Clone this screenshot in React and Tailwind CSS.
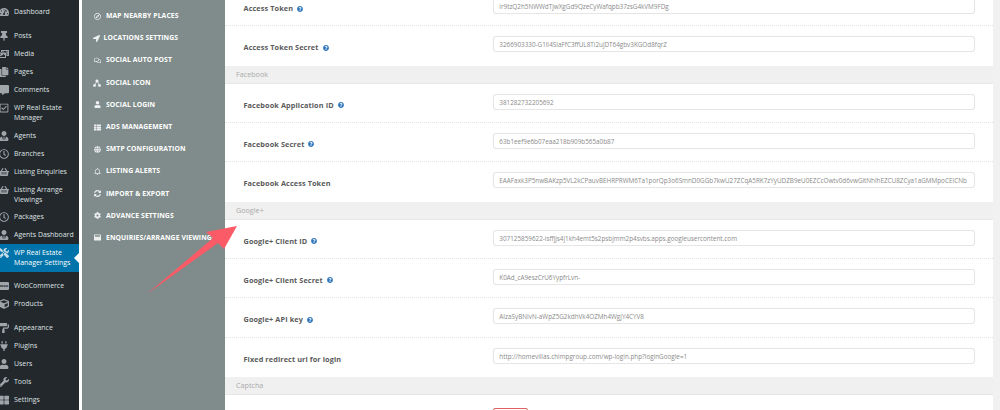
import React from "react";
import {
  FaTachometerAlt, FaThumbtack, FaPhotoVideo, FaCopy, FaCommentAlt, FaRegCheckSquare, FaUserTie, FaRegClock,
  FaShoppingBasket, FaTools, FaCube, FaPaintRoller, FaPlug, FaUser, FaWrench, FaThLarge, FaRegCompass,
  FaLocationArrow, FaRegComments, FaThList, FaGlobe, FaRegBell, FaSyncAlt, FaCog, FaWindowMaximize, FaQuestionCircle,
} from "react-icons/fa";

function HubIcon() {
  return (
    <svg width="8" height="8" viewBox="0 0 16 16" fill="currentColor" stroke="currentColor">
      <circle cx="8" cy="4" r="2.6" />
      <circle cx="3" cy="13" r="2.4" />
      <circle cx="13" cy="13" r="2.4" />
      <path d="M8 4 L3 13 M8 4 L13 13" strokeWidth="1.6" fill="none" />
    </svg>
  );
}

const menu = [
  { g: 3, items: [["Dashboard", FaTachometerAlt]] },
  {
    g: 6,
    items: [
      ["Posts", FaThumbtack],
      ["Media", FaPhotoVideo],
      ["Pages", FaCopy],
      ["Comments", FaCommentAlt],
      [["WP Real Estate", "Manager"], FaRegCheckSquare],
      ["Agents", FaUserTie],
      ["Branches", FaRegClock],
      ["Listing Enquiries", FaShoppingBasket],
      [["Listing Arrange", "Viewings"], FaShoppingBasket],
      ["Packages", FaRegClock],
      ["Agents Dashboard", FaUserTie],
      [["WP Real Estate", "Manager Settings"], FaTools, true],
    ],
  },
  { g: 5, items: [["WooCommerce", null], ["Products", FaCube]] },
  {
    g: 6,
    items: [
      ["Appearance", FaPaintRoller],
      ["Plugins", FaPlug],
      ["Users", FaUser],
      ["Tools", FaWrench],
      ["Settings", FaThLarge],
    ],
  },
];

function MenuItem({ label, Icon, active }) {
  const two = Array.isArray(label);
  return (
    <div
      className={`relative flex items-start pl-[14px] text-[6.95px] leading-[10px] font-medium whitespace-nowrap ${two ? "h-[27.5px] pt-[4px]" : "h-[18px] pt-[4px]"} ${active ? "bg-[#0073aa] text-white" : "text-[#dfe1e2]"}`}
    >
      <span className={`absolute left-[-1px] top-[4px] text-[10px] ${active ? "text-[#c5dbe6]" : "text-[#a0a5aa]"}`}>
        {Icon ? (
          <Icon />
        ) : (
          <span className="block mt-[1px] w-[10px] h-[8px] bg-[#a0a5aa] rounded-[1px] text-[4px] leading-[8px] text-center text-[#23282d] font-bold">woo</span>
        )}
      </span>
      <span>
        {two ? label.map((l) => <span key={l} className="block">{l}</span>) : label}
      </span>
      {active && (
        <span className="absolute right-0 top-[9px] w-0 h-0 border-y-[5px] border-y-transparent border-r-[5px] border-r-white" />
      )}
    </div>
  );
}

const tabs = [
  ["MAP NEARBY PLACES", FaRegCompass],
  ["LOCATIONS SETTINGS", FaLocationArrow, true],
  ["SOCIAL AUTO POST", FaRegComments],
  ["SOCIAL ICON", HubIcon],
  ["SOCIAL LOGIN", FaUser],
  ["ADS MANAGEMENT", FaThList],
  ["SMTP CONFIGURATION", FaGlobe],
  ["LISTING ALERTS", FaRegBell],
  ["IMPORT & EXPORT", FaSyncAlt],
  ["ADVANCE SETTINGS", FaCog],
  ["ENQUIRIES/ARRANGE VIEWINGS", FaWindowMaximize],
];

function Row({ label, help = true, value, last, first }) {
  return (
    <div className={`h-[39.33px] pl-[18.5px] pr-[18px] flex items-start ${last ? "" : "border-b border-dotted border-[#e3e3e3]"}`}>
      <div className="w-[250px] pt-[15px] text-[7.3px] leading-[13px] font-bold tracking-[0.1px] text-[#5b5b5b] flex items-center gap-[4px] whitespace-nowrap">
        {label}
        {help && <FaQuestionCircle className="text-[#2f75bb] text-[6px]" />}
      </div>
      <div className={`${first ? "mt-[11px]" : "mt-[10px]"} w-[482px] h-[16px] border border-[#e6e6e6] rounded-[3px] bg-white pl-[5px] pt-[1px] text-[6.33px] leading-[13px] text-[#8a8a8a] whitespace-nowrap overflow-hidden shadow-[0_0_1px_#eeeeee]`}>
        {value}
      </div>
    </div>
  );
}

function Section({ title }) {
  return (
    <div className="h-[18px] bg-[#f0f0f0] border-b border-[#e6e6e6] pl-[11px] text-[7.2px] leading-[17px] text-[#a9a9a9]">
      {title}
    </div>
  );
}

export default function App() {
  return (
    <div className="relative w-[1000px] h-[410px] overflow-hidden flex bg-white" style={{ fontFamily: '"Open Sans", "Noto Sans", sans-serif' }}>
      <aside className="w-[79px] shrink-0 bg-[#23282d]">
        {menu.map((grp, i) => (
          <div key={i} style={{ marginTop: grp.g }}>
            {grp.items.map(([l, Ic, a], j) => (
              <MenuItem key={j} label={l} Icon={Ic} active={a} />
            ))}
          </div>
        ))}
      </aside>
      <div className="w-[3px] shrink-0 bg-white" />
      <nav className="w-[143px] shrink-0 bg-[#7f8c8b] pt-[5px]">
        {tabs.map(([t, Ic, tight]) => (
          <div key={t} className="h-[22.2px] flex items-center text-white font-bold text-[6.8px] tracking-[0.1px] whitespace-nowrap">
            <span className={`${tight ? "w-[8px] ml-[10px]" : "w-[10px] ml-[10px]"} mr-[4px] text-[7px] text-[#eef0f0] flex justify-center`}>
              <Ic />
            </span>
            <span className={tight ? "-ml-[0.5px]" : ""}>{t}</span>
          </div>
        ))}
      </nav>
      <main className="w-[768px] shrink-0 bg-white -mt-[13px] self-start">
        <Row first label="Access Token" value="ir9tzQ2h5NWWdTjwXgGd9QzeCyWafqpb37zsG4kVM9FDg" />
        <Row label="Access Token Secret" value="3266903330-G1lI4SIaFfC3ffUL8Ti2ujDT64gbv3KGOd8fqrZ" last />
        <Section title="Facebook" />
        <Row label="Facebook Application ID" value="381282732205692" />
        <Row label="Facebook Secret" value="63b1eef9e6b07eaa218b909b565a0b87" />
        <Row label="Facebook Access Token" help={false} value="EAAFaxk3P5nwBAKzp5VL2kCPauvBEHRPRWM6Ta1porQp3o6SmnD0GGb7kwU27ZCqA5RK7zYyUDZB9eU0EZCcOwtv0d6vwGltNhlhEZCU8ZCya1aGMMpoCEICNb" last />
        <Section title="Google+" />
        <Row label="Google+ Client ID" value="307125859622-isffjjs4j1kh4emt5s2psbjmm2p4svbs.apps.googleusercontent.com" />
        <Row label="Google+ Client Secret" value="K0Ad_cA9eszCrU6YypfrLvn-" />
        <Row label="Google+ API key" value="AIzaSyBNIvN-aWpZ5G2kdhVk4OZMh4WgjY4CYV8" />
        <Row label="Fixed redirect url for login" help={false} value="http://homevillas.chimpgroup.com/wp-login.php?loginGoogle=1" last />
        <Section title="Captcha" />
        <div className="pl-[268px] pt-[13px]">
          <div className="w-[35px] h-[16px] border border-[#e0605f] rounded-[2px]" />
        </div>
      </main>
      <div className="flex-1 bg-[#f1f1f1]" />
      <svg className="absolute left-0 top-0 pointer-events-none" width="1000" height="410" viewBox="0 0 1000 410">
        <polygon points="237,226 206,232 213,238 147,294 218,243 224,249" fill="#fb5b66" />
      </svg>
    </div>
  );
}
